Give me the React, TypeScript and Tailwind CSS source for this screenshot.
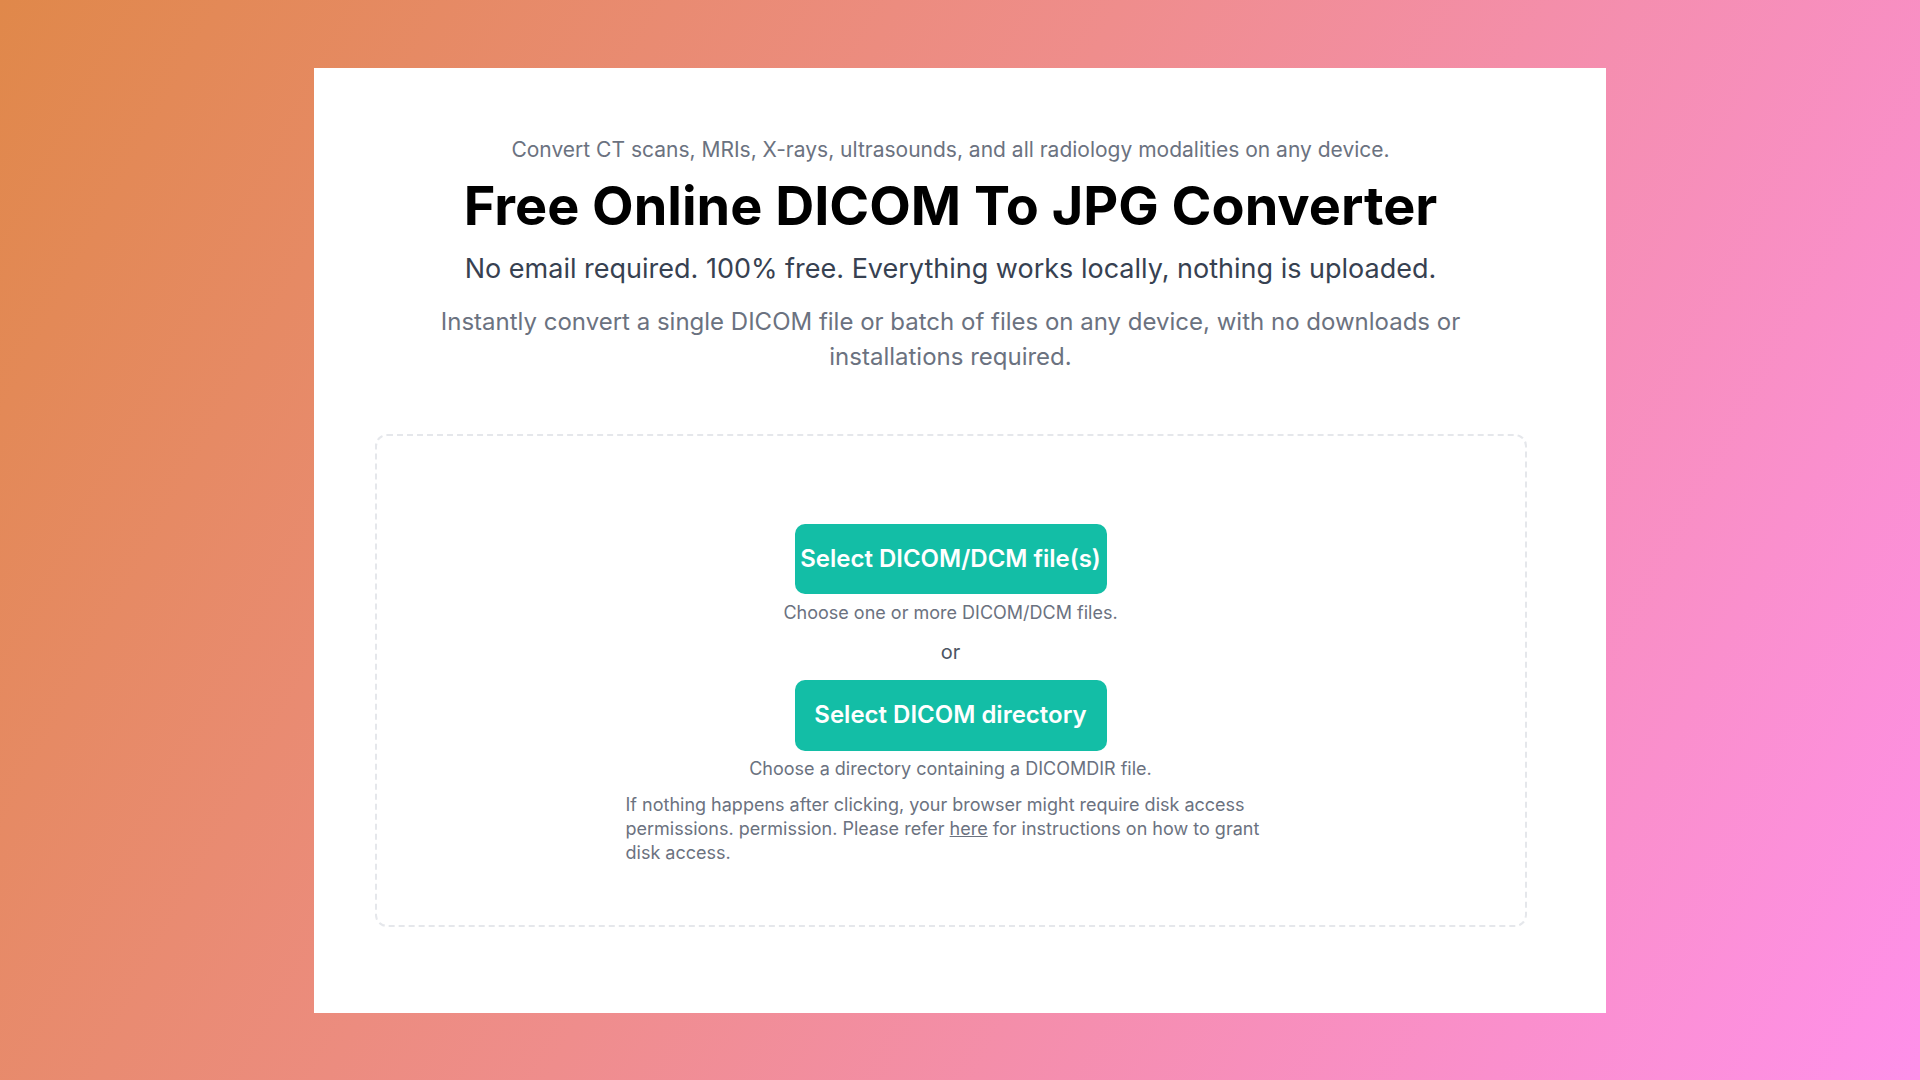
export default function App() {
  return (
    <div
      className="w-[1920px] h-[1080px] flex items-center justify-center bg-[linear-gradient(118deg,#e0884a_0%,#ef8d8c_45%,#ff90ea_100%)]"
      style={{ fontFamily: "Inter, 'Noto Sans', sans-serif" }}
    >
      <div className="w-[1292px] h-[945px] bg-white pr-[19px] flex flex-col items-center">
        <p className="pt-[68px] text-[21px] leading-[28px] text-[#6b7280]">
          Convert CT scans, MRIs, X-rays, ultrasounds, and all radiology modalities on any device.
        </p>
        <h1 className="mt-[9px] text-[54px] leading-[66px] font-bold text-black">
          Free Online DICOM To JPG Converter
        </h1>
        <p className="mt-[14px] text-[27px] leading-[32px] text-[#374151]">
          No email required. 100% free. Everything works locally, nothing is uploaded.
        </p>
        <p className="mt-[19px] w-[1100px] text-center text-[24px] leading-[35px] text-[#6b7280]">
          Instantly convert a single DICOM file or batch of files on any device, with no downloads or installations required.
        </p>
        <div className="mt-[60px] w-[1152px] h-[493px] border-2 border-dashed border-[#e5e7eb] rounded-[12px] flex flex-col items-center pt-[88px]">
          <button className="w-[312px] h-[70px] rounded-[10px] bg-[#13bea6] text-white text-[24px] font-semibold">
            Select DICOM/DCM file(s)
          </button>
          <p className="mt-[7px] text-[18px] leading-[24px] text-[#6b7280]">
            Choose one or more DICOM/DCM files.
          </p>
          <p className="mt-[13px] text-[20px] leading-[28px] text-[#4b5563]">or</p>
          <button className="mt-[14px] w-[312px] h-[71px] rounded-[10px] bg-[#13bea6] text-white text-[24px] font-semibold">
            Select DICOM directory
          </button>
          <p className="mt-[6px] text-[18px] leading-[24px] text-[#6b7280]">
            Choose a directory containing a DICOMDIR file.
          </p>
          <p className="mt-[12px] w-[650px] text-[18px] leading-[24px] text-[#6b7280]">
            If nothing happens after clicking, your browser might require disk access permissions. permission. Please refer{" "}
            <a className="underline">here</a> for instructions on how to grant disk access.
          </p>
        </div>
      </div>
    </div>
  );
}
